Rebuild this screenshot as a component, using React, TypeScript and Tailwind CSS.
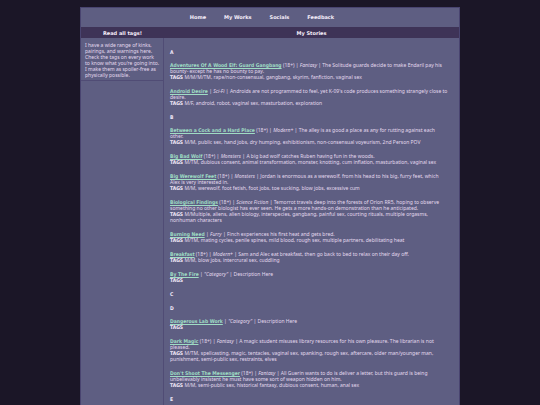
type Story = {
  title: string;
  adult?: boolean;
  genre: string;
  text: string;
  tags?: string;
};

const sections: { letter: string; stories: Story[] }[] = [
  {
    letter: 'A',
    stories: [
      { title: 'Adventures Of A Wood Elf: Guard Gangbang', adult: true, genre: 'Fantasy', text: 'The Solitude guards decide to make Endaril pay his bounty- except he has no bounty to pay.', tags: 'M/M/M/TM, rape/non-consensual, gangbang, skyrim, fanfiction, vaginal sex' },
      { title: 'Android Desire', genre: 'Sci-Fi', text: "Androids are not programmed to feel, yet K-09's code produces something strangely close to desire.", tags: 'M/F, android, robot, vaginal sex, masturbation, exploration' },
    ],
  },
  {
    letter: 'B',
    stories: [
      { title: 'Between a Cock and a Hard Place', adult: true, genre: 'Modern+', text: 'The alley is as good a place as any for rutting against each other.', tags: 'M/M, public sex, hand jobs, dry humping, exhibitionism, non-consensual voyeurism, 2nd Person POV' },
      { title: 'Big Bad Wolf', adult: true, genre: 'Monsters', text: 'A big bad wolf catches Ruben having fun in the woods.', tags: 'M/TM, dubious consent, animal transformation, monster, knotting, cum inflation, masturbation, vaginal sex' },
      { title: 'Big Werewolf Feet', adult: true, genre: 'Monsters', text: 'Jordan is enormous as a werewolf, from his head to his big, furry feet, which Alex is very interested in.', tags: 'M/M, werewolf, foot fetish, foot jobs, toe sucking, blow jobs, excessive cum' },
      { title: 'Biological Findings', adult: true, genre: 'Science Fiction', text: 'Temorrot travels deep into the forests of Orion RR5, hoping to observe something no other biologist has ever seen. He gets a more hands-on demonstration than he anticipated.', tags: 'M/Multiple, aliens, alien biology, interspecies, gangbang, painful sex, courting rituals, multiple orgasms, nonhuman characters' },
      { title: 'Burning Need', genre: 'Furry', text: 'Finch experiences his first heat and gets bred.', tags: 'M/TM, mating cycles, penile spines, mild blood, rough sex, multiple partners, debilitating heat' },
      { title: 'Breakfast', adult: true, genre: 'Modern+', text: 'Sam and Alec eat breakfast, then go back to bed to relax on their day off.', tags: 'M/M, blow jobs, intercrural sex, cuddling' },
      { title: 'By The Fire', genre: '"Category"', text: 'Description Here' },
    ],
  },
  { letter: 'C', stories: [] },
  {
    letter: 'D',
    stories: [
      { title: 'Dangerous Lab Work', genre: '"Category"', text: 'Description Here' },
      { title: 'Dark Magic', adult: true, genre: 'Fantasy', text: 'A magic student misuses library resources for his own pleasure. The librarian is not pleased.', tags: 'M/TM, spellcasting, magic, tentacles, vaginal sex, spanking, rough sex, aftercare, older man/younger man, punishment, semi-public sex, restraints, elves' },
      { title: "Don't Shoot The Messenger", adult: true, genre: 'Fantasy', text: 'All Guerin wants to do is deliver a letter, but this guard is being unbelievably insistent he must have some sort of weapon hidden on him.', tags: 'M/M, semi-public sex, historical fantasy, dubious consent, human, anal sex' },
    ],
  },
  { letter: 'E', stories: [] },
];

function Entry({ story }: { story: Story }) {
  return (
    <p>
      <a href="#" className="font-['DejaVu_Sans_Condensed','DejaVu_Sans',sans-serif] font-bold text-[#9fdcc4] underline">{story.title}</a>
      {story.adult ? ' (18+)' : ''} | <em>{story.genre}</em> | {story.text}
      <br />
      <b className="font-['DejaVu_Sans_Condensed','DejaVu_Sans',sans-serif] text-[#f4eafa]">TAGS</b> {story.tags}
    </p>
  );
}

export default function App() {
  return (
    <div className="min-h-screen bg-[#1b1627] px-20 pt-[7px] font-['Noto_Sans',sans-serif] text-[5px] leading-[6px] text-[#e4daee]">
      <div className="flex min-h-[calc(100vh-7px)] flex-col border-x border-t border-[#494470] bg-[#5e5e82]">
        <nav className="flex h-[19px] items-center justify-center gap-[18px] pr-4 pb-[2px] font-['DejaVu_Sans',Verdana,sans-serif] font-bold text-[#f6eefb]">
          <a href="#">Home</a>
          <a href="#">My Works</a>
          <a href="#">Socials</a>
          <a href="#">Feedback</a>
        </nav>
        <div className="flex h-[11px] items-center bg-[#3e3357] text-center font-['DejaVu_Sans',Verdana,sans-serif] font-bold text-[#f6eefb]">
          <h2 className="w-[83px] shrink-0">Read all tags!</h2>
          <h1 className="flex-1">My Stories</h1>
        </div>
        <div className="flex flex-1">
          <aside className="w-[83px] shrink-0 border-r border-[#504c75]">
            <p className="border-b border-[#504c75] pt-1 pb-[2px] pl-1">
              I have a wide range of kinks,
              <br />
              pairings, and warnings here.
              <br />
              Check the tags on every work
              <br />
              to know what you're going into.
              <br />
              I make them as spoiler-free as
              <br />
              physically possible.
            </p>
          </aside>
          <main className="flex flex-1 flex-col gap-2 pt-[11px] pr-[10px] pb-2 pl-[6px]">
            {sections.map((section) => (
              <section key={section.letter}>
                <h3 className="font-['DejaVu_Sans_Condensed','DejaVu_Sans',sans-serif] font-bold text-[#f4eafa]">{section.letter}</h3>
                {section.stories.length > 0 && (
                  <div className="mt-[7px] flex flex-col gap-2">
                    {section.stories.map((story) => (
                      <Entry key={story.title} story={story} />
                    ))}
                  </div>
                )}
              </section>
            ))}
          </main>
        </div>
      </div>
    </div>
  );
}
